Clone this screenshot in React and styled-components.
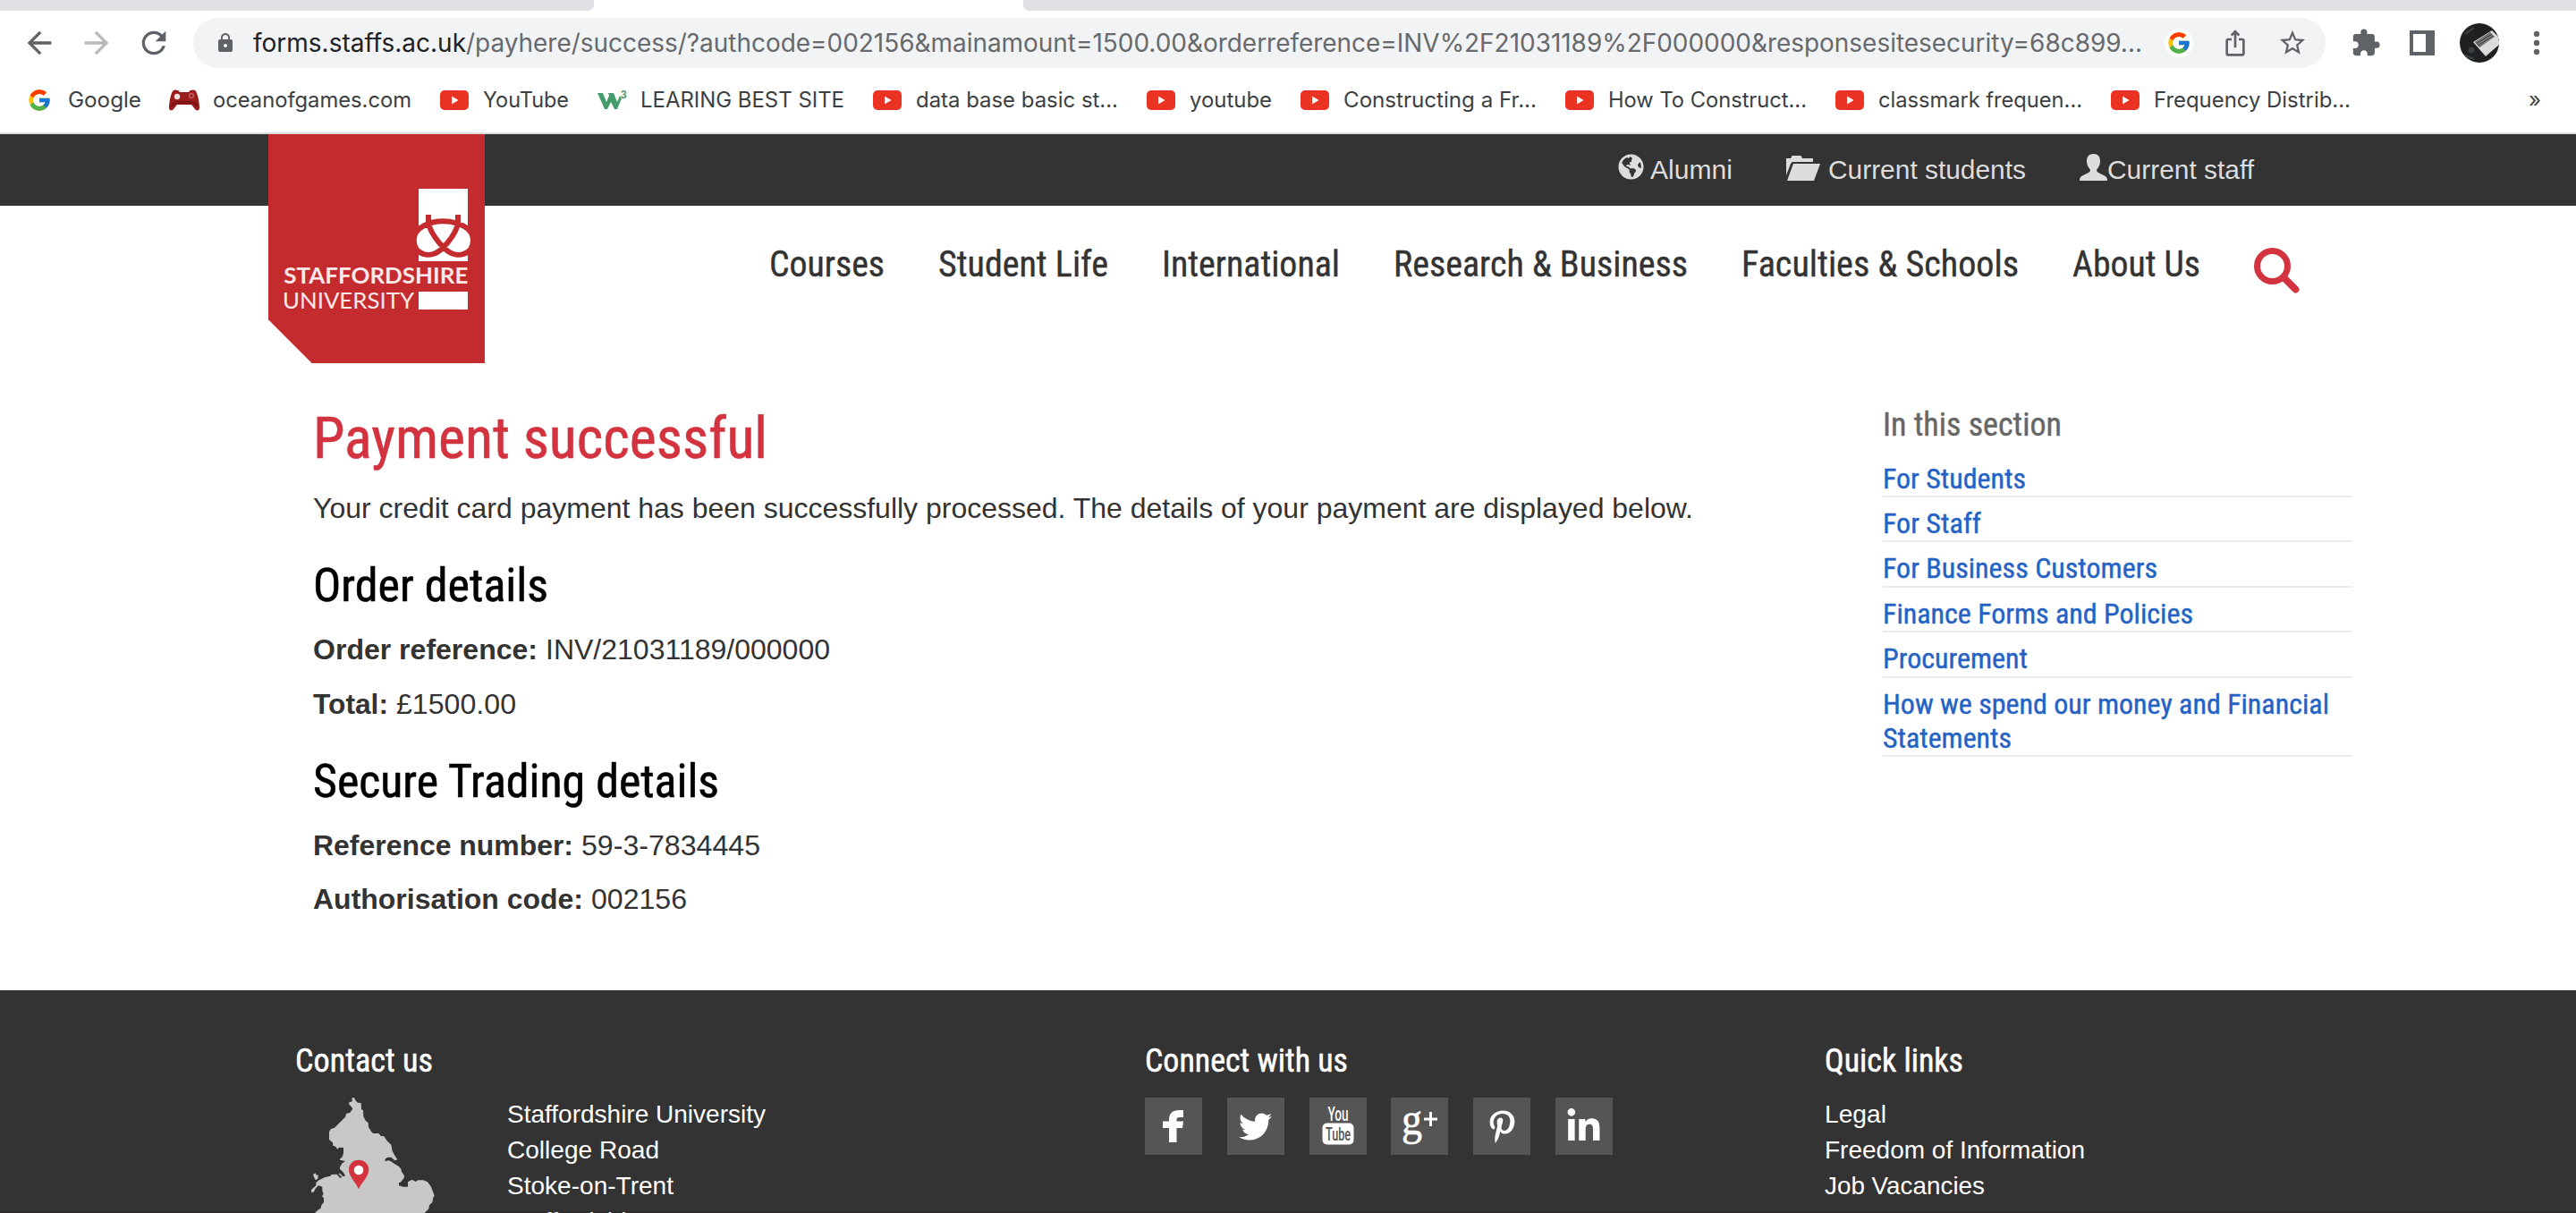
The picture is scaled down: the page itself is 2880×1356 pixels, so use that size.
import React, { useLayoutEffect, useRef } from "react";
import styled, { createGlobalStyle } from "styled-components";
import {
  MdArrowBack,
  MdArrowForward,
  MdRefresh,
  MdLock,
  MdStarBorder,
  MdExtension,
  MdIosShare,
} from "react-icons/md";
import { FcGoogle } from "react-icons/fc";
import { FaGlobeAmericas, FaFacebookF, FaTwitter, FaPinterestP, FaLinkedinIn } from "react-icons/fa";

const arial = `"Liberation Sans", Arial, sans-serif`;
const condensed = `"Roboto Condensed", Roboto, sans-serif`;
const system = `Inter, Roboto, sans-serif`;

const Global = createGlobalStyle`
  * { box-sizing: border-box; }
  body { margin: 0; background: #fff; overflow: hidden; }
  h1, h2, h3, p, ul { margin: 0; padding: 0; font-weight: 400; }
  ul { list-style: none; }
  a { color: inherit; text-decoration: none; }
  svg { display: block; flex: none; overflow: visible; }
`;

/* Text set to an exact measure: the run is stretched or condensed to its width. */
const FitBox = styled.span`
  display: inline-block;
  flex: none;
  width: ${(p) => p.$w}px;
  white-space: nowrap;
  vertical-align: top;
`;
const FitRun = styled.span`
  display: inline-block;
  transform-origin: 0 50%;
  vertical-align: top;
`;
function Fit({ w, children }) {
  const ref = useRef(null);
  useLayoutEffect(() => {
    const el = ref.current;
    el.style.transform = "none";
    el.style.transform = `scaleX(${w / el.getBoundingClientRect().width})`;
  }, [w]);
  return (
    <FitBox $w={w}>
      <FitRun ref={ref}>{children}</FitRun>
    </FitBox>
  );
}

const Page = styled.div`
  width: 2880px;
  height: 1356px;
  overflow: hidden;
  background: #fff;
  font-family: ${arial};
  color: #333;
`;

/* ---------- browser chrome ---------- */
const TabStrip = styled.div`
  display: flex;
  justify-content: space-between;
  height: 12px;
`;
const InactiveTabs = styled.div`
  width: ${(p) => p.$w}px;
  background: #dfe0e4;
  border-radius: ${(p) => (p.$side === "left" ? "0 0 14px 0" : "0 0 0 14px")} / 12px;
`;
const Toolbar = styled.div`
  display: flex;
  align-items: center;
  height: 72px;
  color: #5f6368;
`;
const NavButtons = styled.div`
  display: flex;
  gap: 24px;
  padding-left: 24px;
  width: 216px;
`;
const Omnibox = styled.div`
  display: flex;
  align-items: center;
  width: 2384px;
  height: 56px;
  padding-left: 24px;
  border-radius: 28px;
  background: #f1f3f4;
`;
const Url = styled.div`
  display: flex;
  width: 2127px;
  margin-left: 19px;
  font: 400 28px/40px ${system};
  color: #67696c;
  b {
    font-weight: 400;
    color: #202124;
  }
`;
const GoogleBadge = styled.div`
  display: flex;
  align-items: center;
  justify-content: center;
  width: 32px;
  height: 32px;
  margin-left: 10px;
  border-radius: 50%;
  background: #fff;
`;
const OmniActions = styled.div`
  display: flex;
  align-items: center;
  gap: 31px;
  margin-left: 31px;
`;
const Extensions = styled.div`
  display: flex;
  align-items: center;
  margin-left: 28px;
`;
const ExtensionGroup = styled.div`
  display: flex;
  align-items: center;
  gap: ${(p) => p.$gap}px;
  margin-right: ${(p) => p.$after || 0}px;
`;
const Bookmarks = styled.div`
  display: flex;
  align-items: center;
  gap: 32px;
  height: 64px;
  padding: 0 39px 8px 28px;
  color: #3c4043;
  font: 400 24px/32px ${system};
`;
const Bookmark = styled.a`
  display: flex;
  align-items: center;
  gap: 16px;
`;
const BookmarkIcon = styled.span`
  display: flex;
  justify-content: center;
  width: 32px;
`;
const Overflow = styled.span`
  margin-left: auto;
`;
const Rule = styled.div`
  height: 2px;
  background: #dcdcdc;
`;

/* ---------- site header ---------- */
const Header = styled.header`
  position: relative;
  height: 300px;
`;
const TopBar = styled.div`
  display: flex;
  gap: 60px;
  height: 80px;
  padding: 20px 0 0 1809px;
  background: #333;
  color: #ddd;
  font: 400 30px/40px ${arial};
`;
const TopLink = styled.a`
  display: flex;
  align-items: flex-start;
  gap: ${(p) => p.$gap}px;
  svg {
    margin-top: 2px;
  }
`;
const MainNav = styled.nav`
  display: flex;
  gap: 60px;
  padding: 41px 0 0 860px;
  font: 400 40px/50px ${condensed};
  -webkit-text-stroke: 0.4px;
  svg {
    margin-top: 6px;
  }
`;
const LogoLink = styled.a`
  position: absolute;
  left: 300px;
  top: 0;
`;

/* ---------- content ---------- */
const Content = styled.div`
  display: grid;
  grid-template-columns: 1755px 525px;
  height: 657px;
  padding-left: 350px;
`;
const Title = styled.h1`
  font: 400 65px/80px ${condensed};
  color: #d2333f;
  margin-bottom: 18px;
  -webkit-text-stroke: 0.6px;
`;
const SubTitle = styled.h2`
  font: 400 52px/60px ${condensed};
  color: #000;
  margin: 37px 0 21px;
  -webkit-text-stroke: 0.6px;
`;
const Line = styled.p`
  display: flex;
  gap: 9px;
  font: 400 32px/40px ${arial};
  & + & {
    margin-top: 20.5px;
  }
  b {
    font-weight: 700;
  }
`;
const Aside = styled.aside`
  padding-top: 3px;
  font-family: ${condensed};
  -webkit-text-stroke: 0.4px;
`;
const AsideTitle = styled.h3`
  font: 400 36px/44px ${condensed};
  color: #666;
  margin-bottom: 8.6px;
`;
const AsideItem = styled.li`
  display: flex;
  flex-direction: column;
  padding-top: 10px;
  border-bottom: 2px solid #ebebeb;
  font: 400 32px/38.4px ${condensed};
  color: #2462c4;
`;

/* ---------- footer ---------- */
const Footer = styled.footer`
  display: grid;
  grid-template-columns: 950px 760px 500px;
  height: 249px;
  padding: 57px 0 0 330px;
  border-bottom: 1px solid #2c2526;
  background: #333;
  color: #fff;
`;
const FooterTitle = styled.h3`
  font: 400 36px/44px ${condensed};
  margin-bottom: 18px;
  -webkit-text-stroke: 0.5px;
`;
const Contact = styled.div`
  display: flex;
  gap: 79px;
  padding-left: 15px;
  svg {
    margin-top: 1px;
  }
`;
const Lines = styled.ul`
  font: 400 28px/40px ${arial};
`;
const Social = styled.div`
  display: flex;
  gap: 27.8px;
  padding-top: 1px;
`;
const SocialTile = styled.a`
  display: flex;
  align-items: center;
  justify-content: center;
  width: 64px;
  height: 64px;
  background: #555;
`;

const YouTubeIcon = () => (
  <svg width="32" height="22" viewBox="0 0 32 22">
    <rect width="32" height="22" rx="5" fill="#ea3323" />
    <path d="M13 6.5 20.5 11 13 15.5z" fill="#fff" />
  </svg>
);
const GamepadIcon = () => (
  <svg width="34" height="24" viewBox="0 0 34 24">
    <path
      d="M4 2c2-2 6-2 8 1h10c2-3 6-3 8-1 2 3 4 12 4 19 0 3-4 3-5 1l-4-5H9l-4 5c-1 2-5 2-5-1C0 14 2 5 4 2z"
      fill="#9b1c1c"
    />
    <path d="M3 15l6-2h16l6 2 2 6-6-5H7l-6 5z" fill="#7d1414" />
    <circle cx="9" cy="8" r="3.200" fill="#f2dede" />
    <circle cx="25" cy="7" r="3.200" fill="#c05a5a" />
    <circle cx="25" cy="7" r="1.600" fill="#8e1b1b" />
  </svg>
);
const W3Icon = () => (
  <svg width="34" height="24" viewBox="0 0 34 24">
    <path d="M1 4h6l4 10 3-7-1-3h6l4 10 3-7 2 3-5 12h-3l-4-8-4 8H9z" fill="#449b6c" />
    <text x="27" y="10" fontSize="12" fontWeight="700" fontFamily="Liberation Sans, sans-serif" fill="#449b6c">
      3
    </text>
  </svg>
);
const PanelIcon = () => (
  <svg width="28" height="28" viewBox="0 0 28 28">
    <path d="M0 0h28v28H0zM4 4v20h14V4z" fill="#5f6368" fillRule="evenodd" />
  </svg>
);
const Avatar = () => (
  <svg width="44" height="44" viewBox="0 0 44 44">
    <defs>
      <clipPath id="avatar">
        <circle cx="22" cy="22" r="22" />
      </clipPath>
    </defs>
    <g clipPath="url(#avatar)">
      <rect width="44" height="44" fill="#1e2022" />
      <path d="M15 21 36 8l8 8v8L29 37z" fill="#dcdcda" />
      <path d="M17 21 34 10l5 5-17 12z" fill="#4b4d4e" />
      <path d="M18 21.500 35 11M20 23.500 37 13M21.500 25.500 38.500 15" stroke="#a9abab" strokeWidth=".8" />
      <circle cx="13" cy="30" r="3.500" fill="#3c3f42" />
      <path d="M6 12 16 5M6 36l10 4" stroke="#3f4346" strokeWidth="2" />
    </g>
  </svg>
);
const DotsIcon = () => (
  <svg width="8" height="28" viewBox="0 0 8 28" fill="#5f6368">
    <circle cx="4" cy="4" r="3.200" />
    <circle cx="4" cy="14" r="3.200" />
    <circle cx="4" cy="24" r="3.200" />
  </svg>
);
const FolderIcon = () => (
  <svg width="38" height="30" viewBox="0 0 38 30" fill="#ddd">
    <path d="M0 5h5l1.500-3h10L18 5h12v4H7L5 11 0 24z" />
    <path d="M8 11h30l-7 19H1z" />
  </svg>
);
const UserIcon = () => (
  <svg width="31" height="30" viewBox="0 0 31 30" fill="#ddd">
    <path d="M15.500 0c5 0 7.500 3 7.500 8 0 4-1.500 7-3.500 9-.8 1.500-.3 3 1.500 4l7 3.500c2 1 3 2.500 3 5.500H0c0-3 1-4.500 3-5.500L10 21c1.800-1 2.300-2.500 1.500-4C9.500 15 8 12 8 8c0-5 2.500-8 7.500-8z" />
  </svg>
);
const SearchIcon = () => (
  <svg width="51" height="51" viewBox="0 0 51 51" fill="none" stroke="#d2333f">
    <circle cx="20.500" cy="20.500" r="17" strokeWidth="7" />
    <path d="M33 33 46.500 46.500" strokeWidth="8" strokeLinecap="round" />
  </svg>
);
const Logo = () => (
  <svg width="242" height="256" viewBox="60 30 726 768">
    <path d="M60 30h726v768H206L60 652z" fill="#c42b2e" />
    <path d="M564 213h165v243H564z" fill="#fff" />
    <path
      d="M597 300v28C602 358 634 398 650 412 690 452 747 436 747 385 747 342 690 322 647 322S548 342 548 385C548 436 605 452 644 412 660 398 692 358 696 328v-28"
      fill="#fff"
      stroke="#c42b2e"
      strokeWidth="18"
    />
    <path d="M564 558h165v60H564z" fill="#fff" />
    <text x="112" y="530" textLength="618" lengthAdjust="spacingAndGlyphs" fontFamily="Lato, sans-serif" fontWeight="700" fontSize="75" fill="#fbe9e9">
      STAFFORDSHIRE
    </text>
    <text x="108" y="614" textLength="441" lengthAdjust="spacingAndGlyphs" fontFamily="Lato, sans-serif" fontWeight="400" fontSize="77" fill="#fbe9e9">
      UNIVERSITY
    </text>
  </svg>
);
const MapIcon = () => (
  <svg width="143" height="129" viewBox="45 51 429 387">
    <path
      d="M193 51H198L202 60 210 68 221 69 222 90 228 94 229 114 236 128 245 136 246 150 256 166 261 171H280L288 180 298 181 308 196 322 209 326 230 334 245 343 259 334 262 322 251H310L302 257V265L312 262 320 264 334 274 348 282 356 292V298L366 313 365 320 355 334 348 337V346L362 350H378V334L392 326 404 333 412 328H430L444 334 456 350 464 372 467 380 463 386 460 402 450 412 448 424 440 432 434 438H66L76 428 86 422 88 412 96 402V388L90 382 95 374 91 364V350L78 346 68 356 62 368 54 368V360L70 346V336L80 328 100 318 118 314 122 309 140 308 150 320 157 319 145 306 150 305 160 315 168 314 162 302 150 290V284L157 272 168 264 150 260V257L158 250 162 238V219L148 218 141 224 137 216 127 212 126 202 114 192V166L120 156 132 152 144 140 156 128 168 116 172 104 184 102 193 88 180 72 182 66 192 64 190 54Z"
      fill="#c8c8c8"
    />
    <path d="M60 309 68 304 70 310 77 311V320L71 328 66 324Z" fill="#c8c8c8" />
    <path d="M213 358C206 338 180 316 180 293 180 274 194 260 213 260S247 274 247 293C247 316 220 338 213 358Z" fill="#d2333f" />
    <circle cx="213" cy="294" r="16" fill="#fff" />
  </svg>
);
const YouTubeTile = () => (
  <svg width="36" height="46" viewBox="0 0 36 46">
    <text x="6.500" y="17" textLength="23" lengthAdjust="spacingAndGlyphs" fontFamily="Roboto, sans-serif" fontWeight="500" fontSize="22" fill="#fff">
      You
    </text>
    <rect x=".5" y="19.500" width="35" height="24" rx="5" fill="#fff" />
    <text x="4" y="39" textLength="28" lengthAdjust="spacingAndGlyphs" fontFamily="Roboto, sans-serif" fontWeight="500" fontSize="21" fill="#555">
      Tube
    </text>
  </svg>
);
const GooglePlusTile = () => (
  <svg width="44" height="44" viewBox="0 0 44 44">
    <text x="2" y="31" textLength="23" lengthAdjust="spacingAndGlyphs" fontFamily="Liberation Serif, serif" fontSize="50" fill="#fff" stroke="#fff" strokeWidth=".6">
      g
    </text>
    <path d="M34.500 6v16M27 14h15" stroke="#fff" strokeWidth="3" />
  </svg>
);
const FacebookTile = () => (
  <svg width="24" height="36" viewBox="0 0 24 36" fill="#fff">
    <path d="M7 36V20H0v-7.500h7V11C7 3.500 11 0 18 0h5v8h-4c-2.500 0-3.500 1-3.500 3v1.500H23L22 20h-6.500v16z" />
  </svg>
);

const bookmarks = [
  { icon: <FcGoogle size={28} />, label: "Google", w: 82 },
  { icon: <GamepadIcon />, label: "oceanofgames.com", w: 222 },
  { icon: <YouTubeIcon />, label: "YouTube", w: 96 },
  { icon: <W3Icon />, label: "LEARING BEST SITE", w: 228 },
  { icon: <YouTubeIcon />, label: "data base basic st...", w: 226 },
  { icon: <YouTubeIcon />, label: "youtube", w: 92 },
  { icon: <YouTubeIcon />, label: "Constructing a Fr...", w: 216 },
  { icon: <YouTubeIcon />, label: "How To Construct...", w: 222 },
  { icon: <YouTubeIcon />, label: "classmark frequen...", w: 228 },
  { icon: <YouTubeIcon />, label: "Frequency Distrib...", w: 220 },
];
const nav = [
  ["Courses", 129],
  ["Student Life", 190],
  ["International", 199],
  ["Research & Business", 329],
  ["Faculties & Schools", 310],
  ["About Us", 143],
];
const sections = [
  [["For Students", 160]],
  [["For Staff", 110]],
  [["For Business Customers", 307]],
  [["Finance Forms and Policies", 347]],
  [["Procurement", 162]],
  [["How we spend our money and Financial", 499], ["Statements", 144]],
];

const Detail = ({ label, lw, value, vw }) => (
  <Line>
    <b>
      <Fit w={lw}>{label}</Fit>
    </b>
    <Fit w={vw}>{value}</Fit>
  </Line>
);

export default function App() {
  return (
    <Page>
      <Global />
      <TabStrip>
        <InactiveTabs $w={664} $side="left" />
        <InactiveTabs $w={1736} $side="right" />
      </TabStrip>
      <Toolbar>
        <NavButtons>
          <MdArrowBack size={40} />
          <MdArrowForward size={40} color="#bababa" />
          <MdRefresh size={40} />
        </NavButtons>
        <Omnibox>
          <MdLock size={24} />
          <Url>
            <b>
              <Fit w={238}>forms.staffs.ac.uk</Fit>
            </b>
            <Fit w={1874}>
              /payhere/success/?authcode=002156&amp;mainamount=1500.00&amp;orderreference=INV%2F21031189%2F000000&amp;responsesitesecurity=68c899...
            </Fit>
          </Url>
          <GoogleBadge>
            <FcGoogle size={28} />
          </GoogleBadge>
          <OmniActions>
            <MdIosShare size={32} />
            <MdStarBorder size={34} />
          </OmniActions>
        </Omnibox>
        <Extensions>
          <ExtensionGroup $gap={32} $after={28}>
            <MdExtension size={34} />
            <PanelIcon />
          </ExtensionGroup>
          <ExtensionGroup $gap={38}>
            <Avatar />
            <DotsIcon />
          </ExtensionGroup>
        </Extensions>
      </Toolbar>
      <Bookmarks>
        {bookmarks.map((b) => (
          <Bookmark key={b.label}>
            <BookmarkIcon>{b.icon}</BookmarkIcon>
            <Fit w={b.w}>{b.label}</Fit>
          </Bookmark>
        ))}
        <Overflow>»</Overflow>
      </Bookmarks>
      <Rule />

      <Header>
        <TopBar>
          <TopLink $gap={7}>
            <FaGlobeAmericas size={29} />
            <Fit w={92}>Alumni</Fit>
          </TopLink>
          <TopLink $gap={9}>
            <FolderIcon />
            <Fit w={221}>Current students</Fit>
          </TopLink>
          <TopLink $gap={0}>
            <UserIcon />
            <Fit w={164}>Current staff</Fit>
          </TopLink>
        </TopBar>
        <MainNav>
          {nav.map(([label, w]) => (
            <a key={label}>
              <Fit w={w}>{label}</Fit>
            </a>
          ))}
          <SearchIcon />
        </MainNav>
        <LogoLink>
          <Logo />
        </LogoLink>
      </Header>

      <Content>
        <main>
          <Title>
            <Fit w={508}>Payment successful</Fit>
          </Title>
          <Line>
            <Fit w={1543}>
              Your credit card payment has been successfully processed. The details of your payment are displayed below.
            </Fit>
          </Line>
          <SubTitle>
            <Fit w={263}>Order details</Fit>
          </SubTitle>
          <Detail label="Order reference:" lw={251} value="INV/21031189/000000" vw={318} />
          <Detail label="Total:" lw={84} value="£1500.00" vw={134} />
          <SubTitle>
            <Fit w={454}>Secure Trading details</Fit>
          </SubTitle>
          <Detail label="Reference number:" lw={291} value="59-3-7834445" vw={200} />
          <Detail label="Authorisation code:" lw={302} value="002156" vw={107} />
        </main>
        <Aside>
          <AsideTitle>
            <Fit w={200}>In this section</Fit>
          </AsideTitle>
          <ul>
            {sections.map((lines) => (
              <AsideItem key={lines[0][0]}>
                {lines.map(([text, w]) => (
                  <Fit key={text} w={w}>
                    {text}
                  </Fit>
                ))}
              </AsideItem>
            ))}
          </ul>
        </Aside>
      </Content>

      <Footer>
        <div>
          <FooterTitle>
            <Fit w={154}>Contact us</Fit>
          </FooterTitle>
          <Contact>
            <MapIcon />
            <Lines>
              <li><Fit w={289}>Staffordshire University</Fit></li>
              <li><Fit w={170}>College Road</Fit></li>
              <li><Fit w={186}>Stoke-on-Trent</Fit></li>
              <li><Fit w={280}>Staffordshire ST4 2DE</Fit></li>
            </Lines>
          </Contact>
        </div>
        <div>
          <FooterTitle>
            <Fit w={227}>Connect with us</Fit>
          </FooterTitle>
          <Social>
            <SocialTile><FacebookTile /></SocialTile>
            <SocialTile><FaTwitter size={37} color="#fff" /></SocialTile>
            <SocialTile><YouTubeTile /></SocialTile>
            <SocialTile><GooglePlusTile /></SocialTile>
            <SocialTile><FaPinterestP size={37} color="#fff" /></SocialTile>
            <SocialTile><FaLinkedinIn size={41} color="#fff" /></SocialTile>
          </Social>
        </div>
        <div>
          <FooterTitle>
            <Fit w={155}>Quick links</Fit>
          </FooterTitle>
          <Lines>
            <li><Fit w={69}>Legal</Fit></li>
            <li><Fit w={291}>Freedom of Information</Fit></li>
            <li><Fit w={179}>Job Vacancies</Fit></li>
          </Lines>
        </div>
      </Footer>
    </Page>
  );
}
